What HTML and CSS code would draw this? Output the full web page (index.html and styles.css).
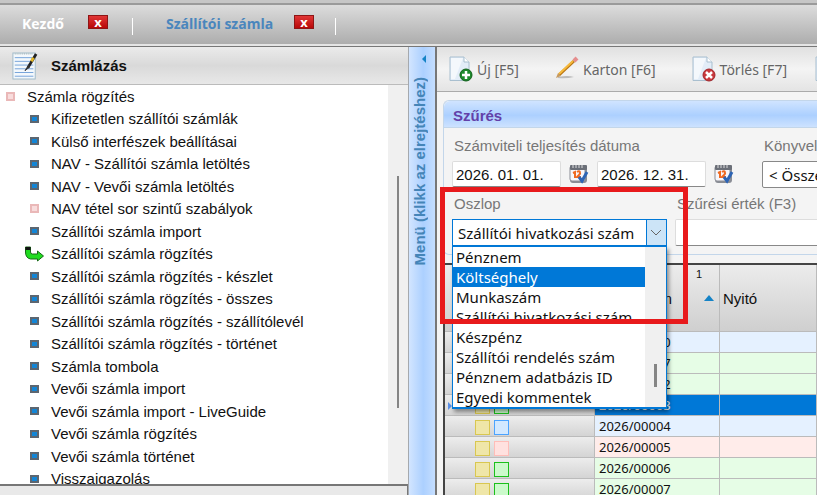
FILE: index.html
```html
<!DOCTYPE html>
<html lang="hu">
<head>
    <meta charset="UTF-8">
    <meta name="viewport" content="width=device-width, initial-scale=1.0">
    <title>Szállítói számla</title>
    <link rel="stylesheet" href="styles.css">
</head>
<body>
    <svg class="sprite" aria-hidden="true">
        <symbol id="page" viewBox="0 0 24 26">
            <path d="M1 1h14l5 5v18.500H1z" fill="#e3edf8" stroke="#a9bfcf"/>
            <path d="M2 2h12l-8 21H2z" fill="#fff" opacity=".6"/>
            <path d="M15 1v5h5" fill="#fff" stroke="#a9bfcf"/>
        </symbol>
        <symbol id="calendar" viewBox="0 0 20 20">
            <rect x="1" y="2" width="17" height="17" rx="3" fill="#8a8d95"/>
            <rect x="1" y="2" width="15" height="15" rx="2" fill="#f6f6fb" stroke="#8a8d95"/>
            <rect x="1" y="1" width="17" height="5" rx="1" fill="#6b6f78"/>
            <path d="M4 1v3M7 1v3M10 1v3M13 1v3" stroke="#ddd"/>
            <path d="M4 9l2-1v6M8 8c3-2 4 1 2 3l-2 2h4" fill="none" stroke="#ef6a22" stroke-width="2"/>
            <path d="M10 13l3 4 5-9" fill="none" stroke="#2d64b4" stroke-width="3"/>
        </symbol>
    </svg>

    <div class="app">
        <nav class="tabs">
            <div class="tab">
                <a href="#">Kezdő</a>
                <button class="close-btn" aria-label="Bezárás">x</button>
            </div>
            <div class="tab active">
                <a href="#">Szállítói számla</a>
                <button class="close-btn" aria-label="Bezárás">x</button>
            </div>
        </nav>

        <div class="workspace">
            <aside class="sidebar">
                <header class="sidebar-header">
                    <svg class="note-icon" viewBox="0 0 28 30">
                        <rect x="1" y="1" width="24" height="28" fill="#f3f8fc" stroke="#9db8c8"/>
                        <path d="M3 2h20" stroke="#9aa" stroke-dasharray="1 1"/>
                        <path d="M3 6h20M3 10h20M3 14h20M3 18h20M3 22h20M3 26h20" stroke="#6f9fd8"/>
                        <path d="M26 2L17 17" stroke="#222" stroke-width="3"/>
                        <path d="M23 6l-2 4" stroke="#e3b523" stroke-width="3"/>
                        <path d="M18 14l-4 6 5-4z" fill="#333" stroke="#333"/>
                    </svg>
                    <h1>Számlázás</h1>
                </header>
                <div class="tree-wrap">
                    <ul class="tree">
                        <li class="root folder"><a href="#">Számla rögzítés</a></li>
                        <li><a href="#">Kifizetetlen szállítói számlák</a></li>
                        <li><a href="#">Külső interfészek beállításai</a></li>
                        <li><a href="#">NAV - Szállítói számla letöltés</a></li>
                        <li><a href="#">NAV - Vevői számla letöltés</a></li>
                        <li class="folder"><a href="#">NAV tétel sor szintű szabályok</a></li>
                        <li><a href="#">Szállítói számla import</a></li>
                        <li class="current">
                            <svg class="arrow-icon" viewBox="0 0 20 16">
                                <path d="M1 1h5v5q0 2 2 2h5V5l6 5-6 5v-2H6Q1 12 1 6z" fill="#1fdc1f" stroke="#176817"/>
                                <path d="M1 1h5v3H1z" fill="#111"/>
                            </svg>
                            <a href="#">Szállítói számla rögzítés</a>
                        </li>
                        <li><a href="#">Szállítói számla rögzítés - készlet</a></li>
                        <li><a href="#">Szállítói számla rögzítés - összes</a></li>
                        <li><a href="#">Szállítói számla rögzítés - szállítólevél</a></li>
                        <li><a href="#">Szállítói számla rögzítés - történet</a></li>
                        <li><a href="#">Számla tombola</a></li>
                        <li><a href="#">Vevői számla import</a></li>
                        <li><a href="#">Vevői számla import - LiveGuide</a></li>
                        <li><a href="#">Vevői számla rögzítés</a></li>
                        <li><a href="#">Vevői számla történet</a></li>
                        <li><a href="#">Visszaigazolás</a></li>
                    </ul>
                    <div class="scrollbar"><div class="thumb"></div></div>
                </div>
                <footer class="sidebar-footer"></footer>
            </aside>

            <button class="menu-toggle">
                <svg class="toggle-arrow" viewBox="0 0 6 8"><path d="M5 0v8L1 4z" fill="#1583c6"/></svg>
                <span>Menü (klikk az elrejtéshez)</span>
            </button>

            <main class="content">
                <div class="toolbar">
                    <button class="tool">
                        <svg class="tool-icon" viewBox="0 0 24 26">
                            <use href="#page"/>
                            <circle cx="17" cy="19" r="6" fill="#1d8a2c" stroke="#116019"/>
                            <path d="M17 15v8M13 19h8" stroke="#fff" stroke-width="2.500"/>
                        </svg>
                        Új [F5]
                    </button>
                    <button class="tool">
                        <svg class="tool-icon" viewBox="0 0 24 26">
                            <path d="M3 21q10-2 16 0-8 2-16 1z" fill="#bbb"/>
                            <path d="M4 19L19 5" stroke="#b87413" stroke-width="3"/>
                            <path d="M4 18L18 5" stroke="#f6b93a" stroke-width="2"/>
                            <path d="M19 5l3-3" stroke="#e58e8e" stroke-width="4"/>
                            <path d="M1 22l2-5 3 3z" fill="#c79b60"/>
                        </svg>
                        Karton [F6]
                    </button>
                    <button class="tool">
                        <svg class="tool-icon" viewBox="0 0 24 26">
                            <use href="#page"/>
                            <circle cx="17" cy="19" r="6" fill="#c9383c" stroke="#a3262a"/>
                            <path d="M14 16l6 6M20 16l-6 6" stroke="#fff" stroke-width="2.500"/>
                        </svg>
                        Törlés [F7]
                    </button>
                    <button class="tool next" aria-label="Mentés">
                        <svg class="tool-icon" viewBox="0 0 24 26"><use href="#page"/></svg>
                    </button>
                </div>

                <section class="filter">
                    <h2>Szűrés</h2>
                    <div class="filter-body">
                        <div class="filter-row">
                            <div class="field dates">
                                <label for="date-from">Számviteli teljesítés dátuma</label>
                                <div class="controls">
                                    <input id="date-from" class="date" type="text" value="2026. 01. 01.">
                                    <button class="cal-btn" aria-label="Naptár"><svg><use href="#calendar"/></svg></button>
                                    <input class="date" type="text" value="2026. 12. 31." aria-label="Záró dátum">
                                    <button class="cal-btn" aria-label="Naptár"><svg><use href="#calendar"/></svg></button>
                                </div>
                            </div>
                            <div class="field">
                                <label for="posted">Könyvelés</label>
                                <select id="posted" class="select">
                                    <option>&lt; Összes &gt;</option>
                                </select>
                            </div>
                        </div>
                        <div class="filter-row">
                            <div class="field column-field">
                                <label for="column">Oszlop</label>
                                <div class="combo">
                                    <select id="column">
                                        <option>Szállítói hivatkozási szám</option>
                                    </select>
                                    <svg class="chevron" viewBox="0 0 20 24"><path d="M5 10l5 5 5-5" fill="none" stroke="#666"/></svg>
                                    <div class="popup">
                                        <ul class="options" role="listbox">
                                            <li role="option">Pénznem</li>
                                            <li role="option" class="selected" aria-selected="true">Költséghely</li>
                                            <li role="option">Munkaszám</li>
                                            <li role="option">Szállítói hivatkozási szám</li>
                                            <li role="option">Készpénz</li>
                                            <li role="option">Szállítói rendelés szám</li>
                                            <li role="option">Pénznem adatbázis ID</li>
                                            <li role="option">Egyedi kommentek</li>
                                        </ul>
                                        <div class="popup-scroll"><div class="thumb"></div></div>
                                    </div>
                                </div>
                            </div>
                            <div class="field value-field">
                                <label for="value">Szűrési érték (F3)</label>
                                <input id="value" type="text">
                            </div>
                        </div>
                    </div>
                    <div class="highlight"></div>
                </section>

                <table class="grid">
                    <colgroup>
                        <col class="col-status">
                        <col class="col-number">
                        <col>
                    </colgroup>
                    <thead>
                        <tr>
                            <th></th>
                            <th>
                                <div class="sorted">
                                    <span>Sorszám</span>
                                    <small>1</small>
                                    <svg class="sort-arrow" viewBox="0 0 10 6"><path d="M0 6l5-6 5 6z" fill="#1583c6"/></svg>
                                </div>
                            </th>
                            <th>Nyitó</th>
                        </tr>
                    </thead>
                    <tbody>
                        <tr class="blue"><td><i></i><i></i></td><td>2026/00010</td><td></td></tr>
                        <tr class="green"><td><i></i><i></i></td><td>2026/00017</td><td></td></tr>
                        <tr class="green"><td><i></i><i></i></td><td>2026/00002</td><td></td></tr>
                        <tr class="green active"><td><i></i><i></i></td><td>2026/00003</td><td></td></tr>
                        <tr class="blue"><td><i></i><i></i></td><td>2026/00004</td><td></td></tr>
                        <tr class="red"><td><i></i><i></i></td><td>2026/00005</td><td></td></tr>
                        <tr class="green"><td><i></i><i></i></td><td>2026/00006</td><td></td></tr>
                        <tr class="green"><td><i></i><i></i></td><td>2026/00007</td><td></td></tr>
                    </tbody>
                </table>
            </main>
        </div>
    </div>
</body>
</html>
```
FILE: styles.css
```css
*, *::before, *::after {
    box-sizing: border-box;
}
body {
    margin: 0;
    font-family: "Liberation Sans", Arial, sans-serif;
    font-size: 15px;
    color: #111;
}
button, input, select {
    font: inherit;
    color: inherit;
    margin: 0;
}
button {
    padding: 0;
    border: 0;
    background: none;
    cursor: pointer;
}
a {
    color: inherit;
    text-decoration: none;
}
ul {
    list-style: none;
    margin: 0;
    padding: 0;
}
.sprite {
    display: none;
}
.app {
    display: flex;
    flex-direction: column;
    height: 100vh;
    overflow: hidden;
    border-top: 3px solid #c6c6c6;
}

/* Tabs */
.tabs {
    display: flex;
    flex: none;
    height: 44px;
    padding-bottom: 4px;
    border-top: 2px solid #9a9a9a;
    border-bottom: 1px solid #777;
    background: linear-gradient(#dcdcdc, #adadad 39px, #e4e4e4 39px);
    font-family: "Open Sans", sans-serif;
    font-size: 14px;
    font-weight: bold;
}
.tab {
    display: flex;
    align-items: center;
    gap: 24px;
    padding: 0 23px 0 22px;
    color: #fff;
}
.tab.active {
    gap: 21px;
    padding-left: 10px;
    color: #4a86bd;
}
.tab::after {
    content: "";
    width: 1px;
    height: 17px;
    margin-top: 5px;
    background: #fff;
}
.close-btn {
    width: 20px;
    height: 14px;
    margin-bottom: 3px;
    border: 1px solid #8d1515;
    background: linear-gradient(#e03535, #b80808);
    color: #fff;
    font-size: 13px;
    line-height: 9px;
}

.workspace {
    display: flex;
    flex: 1;
    min-height: 0;
}

/* Sidebar */
.sidebar {
    display: flex;
    flex-direction: column;
    flex: none;
    width: 409px;
    border-right: 1px solid #a5a9ae;
}
.sidebar-header {
    display: flex;
    align-items: center;
    gap: 13px;
    height: 38px;
    padding-left: 12px;
    border-bottom: 1px solid #bbb;
    background: linear-gradient(#ebebeb, #d9d9d9 50%, #e8e8e8);
}
.sidebar-header h1 {
    margin: 0;
    font-size: 15px;
}
.note-icon {
    width: 26px;
    height: 30px;
}
.tree-wrap {
    display: flex;
    flex: 1;
    min-height: 0;
}
.tree {
    display: grid;
    flex: 1;
    grid-auto-rows: 22px 23px;
    align-content: start;
    overflow: hidden;
    background: #fff;
}
.tree li {
    display: flex;
    align-items: center;
    gap: 12px;
    padding-left: 30px;
    white-space: nowrap;
}
.tree li::before {
    content: "";
    width: 9px;
    height: 8px;
    border: 2px solid #5c6670;
    background: #1285d6;
}
.tree .folder::before {
    height: 9px;
    border-color: #eab8b8;
    background: #f8dcdc;
}
.tree .root {
    padding-left: 6px;
}
.tree .current {
    gap: 6px;
    padding-left: 24px;
}
.tree .current::before {
    display: none;
}
.arrow-icon {
    width: 21px;
    height: 16px;
}
.scrollbar {
    width: 20px;
    padding: 91px 8px 0 9px;
    background: #f0f0f0;
}
.thumb {
    background: #858585;
}
.scrollbar .thumb {
    width: 2px;
    height: 232px;
}
.sidebar-footer {
    height: 11px;
    border-top: 2px solid #777;
    border-right: 1px solid #777;
    background: #e9e9e9;
}
.menu-toggle {
    display: flex;
    flex: none;
    flex-direction: column;
    align-items: center;
    gap: 14px;
    width: 28px;
    padding-top: 8px;
    border-right: 2px solid #777;
    background: linear-gradient(90deg, #d2e5ff, #acd0ff 55%, #c5deff);
    color: #4585b8;
    font-weight: bold;
}
.menu-toggle span {
    margin-right: 6px;
    writing-mode: vertical-rl;
    transform: rotate(180deg);
}
.toggle-arrow {
    align-self: flex-end;
    width: 6px;
    height: 8px;
    margin-right: 8px;
}

/* Toolbar */
.content {
    flex: 1;
    min-width: 0;
    overflow: hidden;
    background: #f4f4f4;
}
.toolbar {
    display: flex;
    align-items: center;
    gap: 36px;
    height: 45px;
    padding-left: 12px;
    border-bottom: 1px solid #aaa;
    background: linear-gradient(#e0e0e0, #f4f4f4 50%, #e4e4e4);
    font-family: "Noto Sans", sans-serif;
    font-size: 14px;
    color: #666;
}
.tool {
    display: flex;
    flex: none;
    align-items: center;
    gap: 4px;
}
.tool.next {
    margin-left: -8px;
}
.tool-icon {
    width: 24px;
    height: 26px;
}

/* Filter */
.filter {
    position: relative;
    margin: 8px 0 0 6px;
    border: 1px solid #c3d6ea;
    border-right: 0;
    border-radius: 6px 0 0 6px;
}
.filter h2 {
    margin: 0;
    height: 27px;
    padding-left: 9px;
    border-bottom: 1px solid #c3d6ea;
    border-radius: 6px 0 0 0;
    background: linear-gradient(#d0e4ff, #acd0ff 55%, #cde2ff);
    color: #6340a8;
    font-size: 15px;
    line-height: 29px;
}
.filter-body {
    height: 126px;
    padding: 6px 0 0 8px;
}
.filter-row {
    display: flex;
    height: 58px;
}
.field {
    display: flex;
    flex: none;
    flex-direction: column;
    white-space: nowrap;
}
.field label {
    height: 27px;
    padding-left: 2px;
    color: #777;
    line-height: 24px;
}
.dates {
    width: 310px;
}
.controls {
    display: flex;
    align-items: center;
    gap: 8px;
}
.field input {
    width: 109px;
    height: 26px;
    padding: 0 3px;
    border: 1px solid #ddd;
    border-bottom-color: #888;
    border-radius: 2px;
    background: #fff;
}
.cal-btn, .cal-btn svg {
    display: block;
    width: 20px;
    height: 20px;
}
.select {
    width: 140px;
    height: 27px;
    padding: 0 6px;
    border: 1px solid #888;
    border-radius: 2px;
    background: #fff;
    font-family: "Noto Sans", sans-serif;
    appearance: none;
}
.column-field {
    width: 223px;
}
.combo {
    position: relative;
    width: 215px;
    font-family: "Noto Sans", sans-serif;
}
.combo select {
    display: block;
    width: 100%;
    height: 27px;
    padding: 0 5px;
    border: 1px solid #0078d7;
    border-radius: 0;
    background: linear-gradient(90deg, #fff 193px, #0078d7 193px, #0078d7 194px, #cce4f7 194px);
    appearance: none;
}
.chevron {
    position: absolute;
    top: 1px;
    right: 1px;
    width: 20px;
    height: 24px;
    pointer-events: none;
}
.popup {
    position: absolute;
    z-index: 1;
    top: 100%;
    left: 0;
    display: flex;
    width: 100%;
    border: 1px solid #0078d7;
    border-bottom-width: 2px;
    background: #fff;
    box-shadow: 2px 3px 4px rgba(0, 0, 0, 0.4);
}
.options {
    flex: 1;
}
.options li {
    height: 20px;
    padding-left: 3px;
    line-height: 20px;
}
.options .selected {
    background: #0078d7;
    color: #fff;
}
.popup-scroll {
    width: 21px;
    padding: 117px 8px 0 9px;
    background: #f0f0f0;
}
.popup-scroll .thumb {
    width: 3px;
    height: 23px;
}
.field.value-field input {
    width: 240px;
    height: 27px;
}
.highlight {
    position: absolute;
    z-index: 2;
    top: 86px;
    left: -4px;
    width: 248px;
    height: 137px;
    border: 5px solid #e81a1c;
    pointer-events: none;
}

/* Grid */
.grid {
    width: calc(100% - 6px);
    margin: 8px 0 0 6px;
    border-top: 2px solid #444;
    border-left: 2px solid #444;
    border-spacing: 0;
    table-layout: fixed;
    font-family: "Noto Sans", sans-serif;
    font-size: 13px;
}
.col-status {
    width: 150px;
}
.col-number {
    width: 125px;
}
.grid th {
    height: 67px;
    padding: 0 3px;
    border-right: 1px solid #bbb;
    border-bottom: 1px solid #bbb;
    background: linear-gradient(#ececec, #cfcfcf);
    font-family: "Liberation Sans", Arial, sans-serif;
    font-size: 15px;
    font-weight: normal;
    text-align: left;
}
.sorted {
    display: grid;
    grid-template-columns: 1fr 32px 10px;
    align-items: center;
    height: 60px;
    padding-right: 2px;
}
.sorted span {
    justify-self: end;
}
.sorted small {
    align-self: start;
    padding-right: 2px;
    font-size: 11px;
    text-align: right;
}
.sort-arrow {
    width: 10px;
    height: 6px;
}
.grid td {
    height: 21px;
    padding: 0 4px;
    border-right: 1px solid #bbb;
    border-bottom: 1px solid #bbb;
    line-height: 18px;
}
.grid td:first-child {
    padding-left: 30px;
    background: linear-gradient(#ededed, #d4d4d4);
}
.grid .active td:first-child::before {
    content: "";
    display: inline-block;
    margin: 0 23px 0 -27px;
    border: 4px solid transparent;
    border-right: 0;
    border-left-color: #5a8fe8;
}
.grid i {
    display: inline-block;
    width: 15px;
    height: 15px;
    margin-right: 4px;
    border: 1px solid #d9c750;
    background: #efe6a8;
    vertical-align: middle;
}
.blue td {
    background: #e5f1ff;
}
.green td {
    background: #e6fde6;
}
.red td {
    background: #ffecea;
}
.blue i + i {
    border-color: #4ba3ff;
    background: #d2e8ff;
}
.green i + i {
    border-color: #1cc01c;
    background: #ccfacc;
}
.red i + i {
    border-color: #ffbdb8;
    background: #ffe1df;
}
.grid .active td + td {
    background: #0078d7;
    color: #fff;
}
```
